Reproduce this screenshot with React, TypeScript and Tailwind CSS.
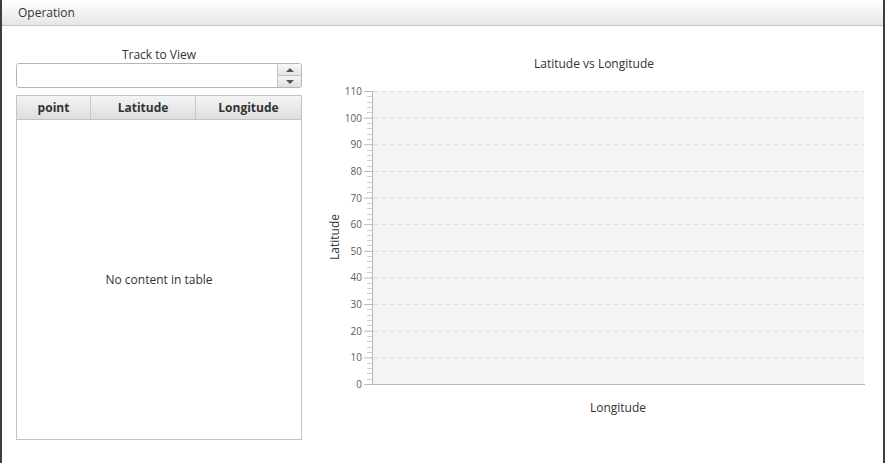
import React from "react";

const font = { fontFamily: '"Open Sans", "Noto Sans", sans-serif' };

const LatLonChart = () => {
  const left = 53;
  const right = 544;
  const top = 65;
  const bottom = 358;
  const step = (bottom - top) / 11;
  const majors = Array.from({ length: 12 }, (_, i) => i * 10);

  return (
    <svg width="560" height="400" className="block" style={font}>
      <text x="274" y="42" textAnchor="middle" fontSize="12" fill="#333">
        Latitude vs Longitude
      </text>
      <rect x={left} y={top} width={right - left} height={bottom - top} fill="#f4f4f4" />
      {majors.map((v, i) => {
        const y = bottom - i * step;
        return (
          <g key={v}>
            {v > 0 && (
              <line x1={left} x2={right} y1={y + 0.5} y2={y + 0.5} stroke="#dedede" strokeDasharray="5 3" />
            )}
            <line x1={44} x2={52} y1={y + 0.5} y2={y + 0.5} stroke="#b8b8b8" />
            <text x="42" y={y + 4} textAnchor="end" fontSize="10" fill="#5a5a5a">
              {v}
            </text>
            {i < 11 &&
              [1, 2, 3, 4].map((m) => (
                <line
                  key={m}
                  x1={47}
                  x2={52}
                  y1={Math.round(y - (m * step) / 5) + 0.5}
                  y2={Math.round(y - (m * step) / 5) + 0.5}
                  stroke="#cfcfcf"
                />
              ))}
          </g>
        );
      })}
      <line x1={52.5} x2={52.5} y1={top} y2={bottom + 1} stroke="#b8b8b8" />
      <line x1={52} x2={right + 1} y1={bottom + 0.5} y2={bottom + 0.5} stroke="#b8b8b8" />
      <text x="298" y="386" textAnchor="middle" fontSize="12" fill="#333">
        Longitude
      </text>
      <text
        x="16"
        y="211"
        textAnchor="middle"
        fontSize="12"
        fill="#333"
        transform="rotate(-90 16 211)"
        dominantBaseline="middle"
      >
        Latitude
      </text>
    </svg>
  );
};

export default function App() {
  return (
    <div className="flex w-[885px] h-[463px] bg-white text-[12px] text-[#333]" style={font}>
      <div className="w-[2px] bg-[#3d3d3d]" />
      <div className="flex-1 flex flex-col">
        <div className="h-[26px] flex items-center pl-[16px] border-b border-[#c4c4c4] bg-gradient-to-b from-white to-[#e6e6e6]">
          Operation
        </div>
        <div className="flex flex-1">
          <div className="ml-[14px] w-[286px] flex flex-col">
            <div className="pt-[21px] h-[37px] text-center leading-[16px]">Track to View</div>
            <div className="h-[25px] flex border border-[#b5b5b5] rounded-[3px] overflow-hidden">
              <div className="flex-1 bg-white" />
              <div className="w-[24px] flex flex-col border-l border-[#c4c4c4]">
                <div className="flex-1 flex items-center justify-center bg-gradient-to-b from-[#f8f8f8] to-[#e4e4e4] border-b border-[#c4c4c4]">
                  <div className="w-0 h-0 border-l-[4px] border-r-[4px] border-b-[4px] border-l-transparent border-r-transparent border-b-[#555]" />
                </div>
                <div className="flex-1 flex items-center justify-center bg-gradient-to-b from-[#f4f4f4] to-[#e0e0e0]">
                  <div className="w-0 h-0 border-l-[4px] border-r-[4px] border-t-[4px] border-l-transparent border-r-transparent border-t-[#555]" />
                </div>
              </div>
            </div>
            <div className="mt-[7px] h-[345px] flex flex-col border border-[#c4c4c4]">
              <div className="h-[24px] flex font-bold text-[12px] bg-gradient-to-b from-[#f4f4f4] to-[#dedede] border-b border-[#c4c4c4]">
                <div className="w-[74px] flex items-center justify-center border-r border-[#c8c8c8]">point</div>
                <div className="w-[105px] flex items-center justify-center border-r border-[#c8c8c8]">Latitude</div>
                <div className="flex-1 flex items-center justify-center">Longitude</div>
              </div>
              <div className="flex-1 flex items-center justify-center bg-white">No content in table</div>
            </div>
          </div>
          <div className="ml-[18px]">
            <LatLonChart />
          </div>
        </div>
      </div>
      <div className="w-[2px] bg-[#3d3d3d]" />
    </div>
  );
}
